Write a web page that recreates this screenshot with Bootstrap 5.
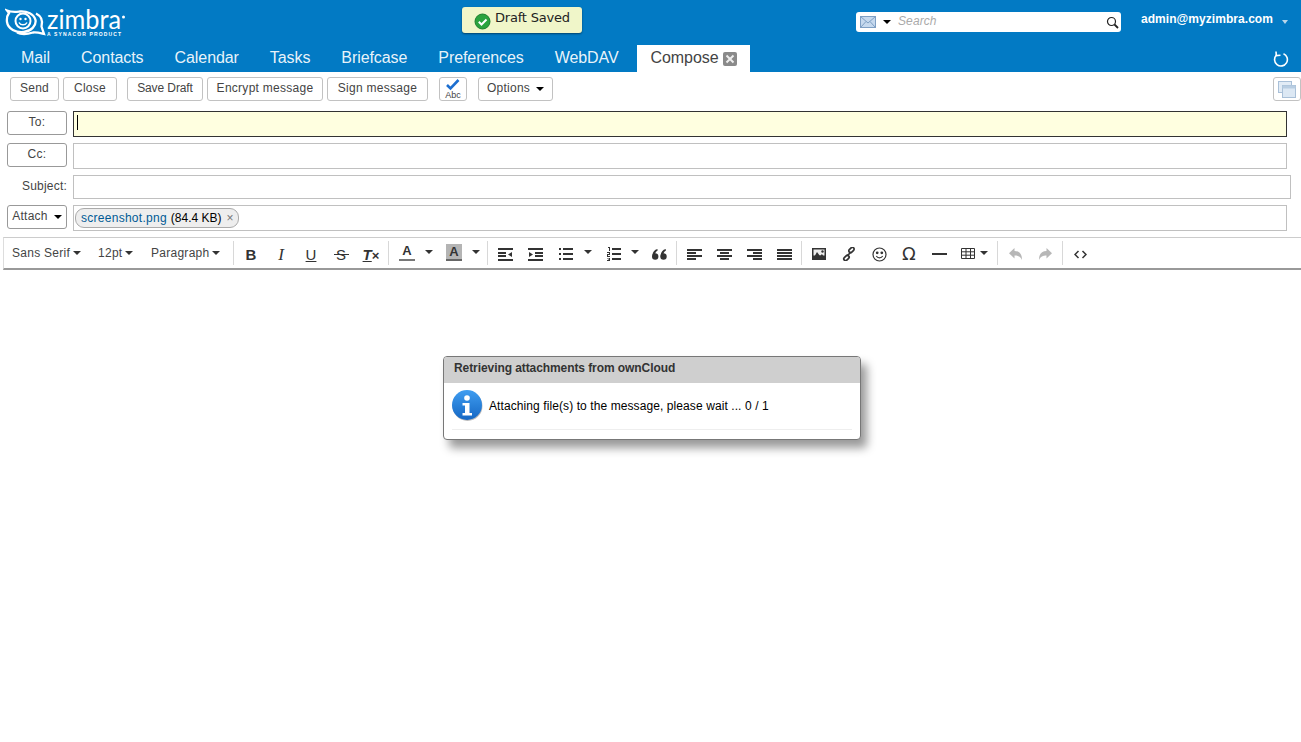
<!DOCTYPE html>
<html lang="en"><head><meta charset="utf-8"><title>Zimbra Compose</title>
<link href="https://cdn.jsdelivr.net/npm/bootstrap@5.3.0/dist/css/bootstrap.min.css" rel="stylesheet">
<style>
html,body{height:742px;overflow:hidden;background:#fff;font-family:"Liberation Sans",Arial,sans-serif;color:#333;font-size:12px}
.zm-head{background:#027ac4;height:72px;position:relative}
.zm-top{height:45px;padding-left:5px}
.zm-logo{width:122px;height:45px;display:block}
.zm-search{position:absolute;left:856px;top:12px;width:265px;height:20px;background:#fff;border-radius:3px}
.zm-search i{position:absolute;left:27px;top:8px}
.zm-search em{position:absolute;left:42px;top:2px;color:#aaa;font-size:12px;line-height:14px;letter-spacing:.1px}
.zm-search svg.a{position:absolute;left:4px;top:4px}
.zm-search svg.b{position:absolute;right:2px;top:4px}
.zm-user{position:absolute;left:1141px;top:12px;color:#fff;font-weight:700;font-size:12px;line-height:14px;letter-spacing:.05px}
.zm-user-caret{position:absolute;left:1282px;top:20px;border-style:solid;border-width:4px 3.5px 0;border-color:#b9d6ea transparent transparent}
.zm-refresh{position:absolute;left:1273px;top:50px}
.zm-tabs{height:27px;gap:31px;font-size:16px;line-height:25px;color:rgba(255,255,255,.93);list-style:none;margin:0;padding:0 0 0 21px;letter-spacing:-.08px}
.zm-tabs li.active{background:#fff;color:#444;margin-left:-13px;padding:0 11px 2px 14px;width:113px;height:27px;display:flex;align-items:center;gap:5px}
.zm-x{width:14px;height:14px;background:#8a8a8a;border-radius:2px;display:block;margin-top:2px}
.zm-x svg{display:block}
.zm-toast{position:absolute;left:462px;top:7px;width:120px;height:26px;background:#f0f6c9;border-radius:3px;box-shadow:0 1px 2px rgba(0,0,0,.45);color:#222;font-family:"DejaVu Sans",sans-serif;font-size:13px;letter-spacing:-.2px;display:flex;align-items:center;padding-left:12px;gap:4px}
.zm-toast span{position:relative;top:-2px}
.zm-toast svg{position:relative;top:1px}
.zm-bar{height:34px;padding:5px 0 0 10px;position:relative}
.zm-btn{display:inline-flex;align-items:center;justify-content:center;height:24px;padding:0;background:#fff;border:1px solid #c2c2c2;border-radius:3px;color:#444;font-size:12px;line-height:14px;box-sizing:border-box;letter-spacing:.27px;white-space:nowrap}
.zm-btn span{position:relative;top:-1px}
.zm-btn.tight{letter-spacing:-.1px}
.zm-tri{display:inline-block;border-style:solid;border-width:4px 4px 0;border-color:#000 transparent transparent}
.zm-rows{padding-top:5px}
.zm-row{display:flex;gap:6px;padding-left:7px;height:32px;align-items:flex-start}
.zm-row.short{height:30px}
.zm-row .zm-btn{width:60px;border-color:#999;flex:none}
.zm-row label{width:60px;text-align:right;flex:none;line-height:22px;margin:0;color:#444;letter-spacing:.2px}
.zm-field{width:1214px;height:26px;border:1px solid #c0c0c0;background:#fff;flex:none}
.zm-field.wide{width:1218px;height:24px}
.zm-field.focus{background:#ffffe0;border-color:#333;padding:3px;line-height:17px}
.zm-caret{display:block;width:1px;height:15px;background:#000}
.zm-chip{display:inline-flex;align-items:center;height:20px;margin:2px 0 0 1px;padding:0 4px 0 5px;background:#eee;border:1px solid #aaa;border-radius:9px;color:#000;font-size:12px;gap:4px;line-height:14px}
.zm-chip a{color:#005a95;text-decoration:none;letter-spacing:.27px}
.zm-chip b{font-weight:400;color:#777;font-size:12px;margin-left:1px}
.zm-tools{margin-left:3px;height:33px;border-top:1px solid #ccc;border-bottom:2px solid #999;border-left:1px solid #ddd;display:flex;align-items:center;color:#333}
.zm-sep{width:1px;height:24px;background:#d8d8d8;flex:none}
.zm-tool{width:30px;height:24px;padding-top:2px;display:flex;align-items:center;justify-content:center;flex:none;font-size:15px;font-weight:700;color:#333;line-height:1}
.zm-drop{display:flex;align-items:center;gap:3px;height:24px;font-size:12px;color:#444;flex:none;letter-spacing:.27px}
.zm-drop .zm-tri,.zm-tool .zm-tri,.zm-tcaret .zm-tri{border-color:#333 transparent transparent}
.zm-tcaret{width:14px;display:flex;justify-content:center;flex:none;margin-top:-3px}
.zm-dim{opacity:.35}
.zm-ital{font-family:"Liberation Serif",serif;font-style:italic;font-weight:400;font-size:17px}
.zm-strike{font-weight:400;background:linear-gradient(#333,#333) center 13px/15px 1px no-repeat}
.zm-color{font-size:13px;display:block;text-align:center;padding-top:3px}
.zm-color span{display:block;margin:0 7px;border-bottom:2px solid #777;padding-bottom:2px}
.zm-color.fill span{background:#b4b4b4;border-bottom-color:#666;padding:1px 0}
.zm-dialog{position:absolute;left:443px;top:356px;width:418px;height:84px;background:#fff;border:1px solid #777;border-radius:4px;box-shadow:6px 8px 10px rgba(0,0,0,.4);overflow:hidden;color:#000}
.zm-dialog-title{height:26px;background:#cfcfcf;color:#333;font-weight:700;font-size:12px;line-height:22px;padding-left:10px;letter-spacing:-.08px}
.zm-dialog-body{margin:0 8px;height:47px;border-bottom:1px solid #eee;display:flex;align-items:center;gap:6px;font-size:12px;letter-spacing:.09px}
.m2{margin-left:2px}.m3{margin-left:3px}.m4{margin-left:4px}.m1{margin-left:1px}.mn1{margin-left:-1px}
.omega{font-size:18px;font-family:"DejaVu Sans",sans-serif;font-weight:400}
.gap-r4{margin-right:4px}.gap-r10{margin-right:10px}.gap-r11{margin-right:11px}
.w49{width:49px}.w54{width:54px}.w76{width:76px}.w116{width:116px}.w101{width:101px}.w28{width:28px}.w75{width:75px}
.d1{margin-left:8px;width:72px}.d2{margin-left:14px;width:53px}.d3{width:79px}.d4{margin-left:7px;width:34px;gap:5px}
</style></head><body>
<div class="zm-head">
 <div class="zm-top">
  <svg class="zm-logo" viewBox="0 -8 122 45" role="img" aria-label="Zimbra">
   <g fill="none" stroke="#fff" stroke-width="2.300">
    <path d="M2 2.500C7 4.500 10 4 15 3.500C22 3 29 6 30.500 12C31.500 18 26 23 19 24C11 25 3 21 2 14C1.500 10 2.500 7 4 5Z"/>
    <path d="M31 5.500C36 8 38 13 36.500 18.500L39 26C35 25 32 24 28 24.500C23 26 16 26.500 12 24.500"/>
   </g>
   <circle cx="18" cy="13" r="7.500" fill="none" stroke="#fff" stroke-width="2"/>
   <circle cx="15.500" cy="11" r="1.200" fill="#fff"/><circle cx="20.500" cy="11" r="1.200" fill="#fff"/>
   <path d="M14 14.500C15.500 17.500 20.500 17.500 22 14.500" fill="none" stroke="#fff" stroke-width="1.500"/>
   <text x="42" y="21" fill="#fff" font-family="Lato,sans-serif" font-size="27" textLength="74" lengthAdjust="spacingAndGlyphs">zimbra</text>
   <circle cx="118.500" cy="9" r="1.500" fill="#fff"/>
   <text x="42" y="28" fill="#fff" font-family="'Liberation Sans',sans-serif" font-weight="700" font-size="5" textLength="74">A SYNACOR PRODUCT</text>
  </svg>
 </div>
 <ul class="zm-tabs d-flex">
  <li>Mail</li><li>Contacts</li><li>Calendar</li><li>Tasks</li><li>Briefcase</li><li>Preferences</li><li>WebDAV</li>
  <li class="active">Compose <span class="zm-x"><svg width="14" height="14" viewBox="0 0 14 14"><path d="M3.500 3.500l7 7m0-7l-7 7" stroke="#eee" stroke-width="2"/></svg></span></li>
 </ul>
 <div class="zm-toast"><svg width="17" height="17" viewBox="0 0 17 17"><circle cx="8.500" cy="8.500" r="7.500" fill="#2ba33e" stroke="#1d7f2e"/><path d="M4.800 8.800l2.700 2.700 5-5" fill="none" stroke="#fff" stroke-width="2"/></svg><span>Draft Saved</span></div>
 <div class="zm-search"><svg class="a" width="16" height="12" viewBox="0 0 16 12"><rect x=".5" y=".5" width="15" height="11" fill="#c6d9ee" stroke="#7e9fc4"/><path d="M.5.500L8 7l7.500-6.500M.5 11.500L6 5.500m9.500 6L10 5.500" fill="none" stroke="#7e9fc4"/></svg><i class="zm-tri"></i><em>Search</em><svg class="b" width="13" height="13" viewBox="0 0 13 13"><circle cx="5.500" cy="5.500" r="4" fill="none" stroke="#222" stroke-width="1.200"/><path d="M8.500 8.500l3.500 3.500" stroke="#222" stroke-width="1.800"/></svg></div>
 <div class="zm-user">admin@myzimbra.com</div><i class="zm-user-caret"></i>
 <svg class="zm-refresh" width="16" height="17" viewBox="0 0 16 17" fill="none" stroke="#fff" stroke-width="1.600"><path d="M10.500 3.700A6.400 6.400 0 1 1 3.500 5"/><path d="M3 1.500L3.300 5.600L7.500 5.300"/></svg>
</div>

<div class="zm-bar d-flex">
 <button class="zm-btn w49 gap-r4"><span>Send</span></button>
 <button class="zm-btn w54 gap-r10"><span>Close</span></button>
 <button class="zm-btn tight w76 gap-r4"><span>Save Draft</span></button>
 <button class="zm-btn w116 gap-r4"><span>Encrypt message</span></button>
 <button class="zm-btn w101 gap-r11"><span>Sign message</span></button>
 <button class="zm-btn w28 gap-r11"><svg width="20" height="20" viewBox="0 0 20 20"><path d="M4 6l3.500 3.500L15.500 1" fill="none" stroke="#1d6fd0" stroke-width="2.600"/><text x="10" y="18.500" text-anchor="middle" font-size="9" fill="#444" font-family="'Liberation Sans',sans-serif" letter-spacing="0">Abc</text></svg></button>
 <button class="zm-btn w75 gap-2"><span>Options</span><i class="zm-tri"></i></button>
 <button class="zm-btn w28 ms-auto"><svg width="18" height="17" viewBox="0 0 18 17"><rect x=".5" y=".5" width="13" height="11" fill="#e2ecf6" stroke="#a9c0d8"/><rect x="4.500" y="4.500" width="13" height="12" fill="#dce8f4" stroke="#a9c0d8"/><rect x="4.500" y="4.500" width="13" height="3" fill="#b8cde2"/></svg></button>
</div>

<div class="zm-rows">
 <div class="zm-row"><button class="zm-btn"><span>To:</span></button><div class="zm-field focus"><i class="zm-caret"></i></div></div>
 <div class="zm-row"><button class="zm-btn"><span>Cc:</span></button><div class="zm-field"></div></div>
 <div class="zm-row short"><label>Subject:</label><div class="zm-field wide"></div></div>
 <div class="zm-row"><button class="zm-btn gap-2"><span>Attach</span><i class="zm-tri"></i></button><div class="zm-field"><span class="zm-chip"><a href="#">screenshot.png</a><span>(84.4 KB)</span><b>×</b></span></div></div>
</div>

<div class="zm-tools">
 <div class="zm-drop d1">Sans Serif<i class="zm-tri"></i></div>
 <div class="zm-drop d2">12pt<i class="zm-tri"></i></div>
 <div class="zm-drop d3">Paragraph<i class="zm-tri"></i></div>
 <div class="zm-sep m3"></div>
 <div class="zm-tool m2">B</div>
 <div class="zm-tool zm-ital">I</div>
 <div class="zm-tool fw-normal"><u>U</u></div>
 <div class="zm-tool zm-strike">S</div>
 <div class="zm-tool fst-italic"><u>T</u><small class="fst-normal mt-1">×</small></div>
 <div class="zm-sep m2"></div>
 <div class="zm-tool zm-color m3"><span>A</span></div>
 <div class="zm-tcaret"><i class="zm-tri"></i></div>
 <div class="zm-tool zm-color fill m3"><span>A</span></div>
 <div class="zm-tcaret"><i class="zm-tri"></i></div>
 <div class="zm-sep m4"></div>
 <div class="zm-tool m2"><svg width="15" height="13" viewBox="0 0 15 13" fill="#333"><path d="M0 0h15v2H0zM0 4h8v2H0zM0 7h8v2H0zM0 11h15v2H0zM14 4v5l-4-2.500z"/></svg></div>
 <div class="zm-tool"><svg width="15" height="13" viewBox="0 0 15 13" fill="#333"><path d="M0 0h15v2H0zM7 4h8v2H7zM7 7h8v2H7zM0 11h15v2H0zM1 4v5l4-2.500z"/></svg></div>
 <div class="zm-tool m1"><svg width="14" height="12" viewBox="0 0 14 12" fill="#333"><path d="M0 0h2v2H0zM0 5h2v2H0zM0 10h2v2H0zM4 0h10v2H4zM4 5h10v2H4zM4 10h10v2H4z"/></svg></div>
 <div class="zm-tcaret"><i class="zm-tri"></i></div>
 <div class="zm-tool m4"><svg width="14" height="14" viewBox="0 0 14 14" fill="#333"><path d="M1 0h2v4H2V1H1zM0 5h3v3H1v1h2v1H0V7h2V6H0zM0 11h3v3H0v-1h2v-.500H1v-.500h1v-.500H0zM5 1h9v2H5zM5 6h9v2H5zM5 11h9v2H5z"/></svg></div>
 <div class="zm-tcaret mn1"><i class="zm-tri"></i></div>
 <div class="zm-tool m2"><svg width="15" height="11" viewBox="0 0 15 11" fill="#333"><circle cx="3.200" cy="7.500" r="3.200"/><circle cx="11.500" cy="7.500" r="3.200"/><path d="M.4 6.500C.6 3 2.500.8 5.500 0v1.800C3.600 2.800 3 4.500 3 6zM8.700 6.500C8.900 3 10.800.8 13.800 0v1.800C11.900 2.800 11.300 4.500 11.300 6z"/></svg></div>
 <div class="zm-sep m2"></div>
 <div class="zm-tool m2"><svg width="15" height="11" viewBox="0 0 15 11" fill="#333"><path d="M0 0h15v2H0zM0 3h9v2H0zM0 6h15v2H0zM0 9h9v2H0z"/></svg></div>
 <div class="zm-tool"><svg width="15" height="11" viewBox="0 0 15 11" fill="#333"><path d="M0 0h15v2H0zM3 3h9v2H3zM0 6h15v2H0zM3 9h9v2H3z"/></svg></div>
 <div class="zm-tool"><svg width="15" height="11" viewBox="0 0 15 11" fill="#333"><path d="M0 0h15v2H0zM6 3h9v2H6zM0 6h15v2H0zM6 9h9v2H6z"/></svg></div>
 <div class="zm-tool"><svg width="15" height="11" viewBox="0 0 15 11" fill="#333"><path d="M0 0h15v2H0zM0 3h15v2H0zM0 6h15v2H0zM0 9h15v2H0z"/></svg></div>
 <div class="zm-sep m2"></div>
 <div class="zm-tool m2"><svg width="14" height="12" viewBox="0 0 14 12"><rect width="14" height="12" fill="#333"/><rect x="1.500" y="1.500" width="11" height="6" fill="#eee"/><path d="M1 11L5 4l3 4 2-2 3 5z" fill="#333"/><circle cx="10.500" cy="3.500" r="1.200" fill="#333"/></svg></div>
 <div class="zm-tool"><svg width="14" height="14" viewBox="0 0 14 14" fill="none" stroke="#333" stroke-width="1.700"><rect x="6.500" y="1.200" width="6" height="3.500" rx="1.700" transform="rotate(-45 9.500 3)"/><rect x="1.500" y="9.200" width="6" height="3.500" rx="1.700" transform="rotate(-45 4.500 11)"/><path d="M5 9l4-4"/></svg></div>
 <div class="zm-tool"><svg width="15" height="15" viewBox="0 0 15 15" fill="none" stroke="#333" stroke-width="1.200"><circle cx="7.500" cy="7.500" r="6.500"/><circle cx="5.200" cy="5.800" r=".8" fill="#333"/><circle cx="9.800" cy="5.800" r=".8" fill="#333"/><path d="M4.300 9c1.500 2.500 4.900 2.500 6.400 0"/></svg></div>
 <div class="zm-tool omega">Ω</div>
 <div class="zm-tool"><svg width="15" height="2" viewBox="0 0 15 2"><rect width="15" height="2" fill="#333"/></svg></div>
 <div class="zm-drop d4"><svg width="14" height="11" viewBox="0 0 14 11" fill="none" stroke="#333"><path d="M.5.500h13v10H.5zM.5 3.800h13M.5 7.200h13M5 .5v10M9.500.5v10"/></svg><i class="zm-tri"></i></div>
 <div class="zm-sep m2"></div>
 <div class="zm-tool zm-dim m2"><svg width="13" height="12" viewBox="0 0 13 12" fill="#333"><path d="M5.500 0v3C10 3 13 5.500 13 12 11.500 8.500 9 7.500 5.500 7.500v3L0 5.200z"/></svg></div>
 <div class="zm-tool zm-dim"><svg width="13" height="12" viewBox="0 0 13 12" fill="#333"><path d="M7.500 0v3C3 3 0 5.500 0 12 1.500 8.500 4 7.500 7.500 7.500v3L13 5.200z"/></svg></div>
 <div class="zm-sep m2"></div>
 <div class="zm-tool m2"><svg width="13" height="9" viewBox="0 0 13 9" fill="none" stroke="#333" stroke-width="1.500"><path d="M4.500 1L1 4.500 4.500 8M8.500 1L12 4.500 8.500 8"/></svg></div>
</div>

<div class="zm-dialog">
 <div class="zm-dialog-title">Retrieving attachments from ownCloud</div>
 <div class="zm-dialog-body"><svg width="31" height="32" viewBox="0 0 31 32"><defs><linearGradient id="ig" x1="0" y1="0" x2="0" y2="1"><stop offset="0" stop-color="#3f9df0"/><stop offset="1" stop-color="#1567c4"/></linearGradient></defs><circle cx="15.500" cy="16" r="15" fill="#bbb"/><circle cx="15" cy="15" r="15" fill="url(#ig)"/><circle cx="15" cy="8" r="2.800" fill="#fff"/><path d="M10.500 13h7v10h2.500v2.500H10.500V23H13v-7.500h-2.500z" fill="#fff"/></svg><span>Attaching file(s) to the message, please wait ... 0 / 1</span></div>
</div>
</body></html>
